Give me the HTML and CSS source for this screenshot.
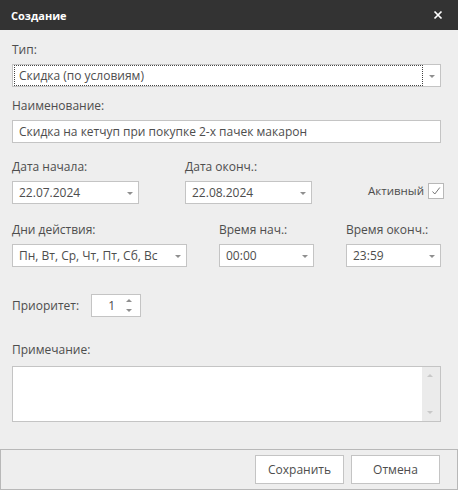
FILE: index.html
```html
<!DOCTYPE html>
<html lang="ru">
<head>
<meta charset="utf-8">
<title>Создание</title>
<link rel="stylesheet" href="styles.css">
</head>
<body>
<div class="dialog">
  <div class="titlebar">
    <span class="title">Создание</span>
    <svg class="close" width="10" height="10" viewBox="0 0 10 10"><path d="M1.5 1.5L8.5 8.5M8.5 1.5L1.5 8.5" stroke="#fff" stroke-width="1.7"/></svg>
  </div>
  <div class="content">
    <div class="field f-type">
      <div class="label">Тип:</div>
      <div class="box select full">
        <span class="focus">Скидка (по условиям)</span>
        <span class="arrow"></span>
      </div>
    </div>
    <div class="field f-name">
      <div class="label">Наименование:</div>
      <div class="box full text">Скидка на кетчуп при покупке 2-х пачек макарон</div>
    </div>
    <div class="row f-dates">
      <div class="field w-date">
        <div class="label">Дата начала:</div>
        <div class="box select"><span class="val">22.07.2024</span><span class="arrow"></span></div>
      </div>
      <div class="field w-date second">
        <div class="label">Дата оконч.:</div>
        <div class="box select"><span class="val">22.08.2024</span><span class="arrow"></span></div>
      </div>
      <div class="active">
        <span class="active-label">Активный</span>
        <span class="check"><svg width="12" height="12" viewBox="0 0 12 12"><path d="M2.5 6.5L4.8 9L9.8 2.5" fill="none" stroke="#666" stroke-width="0.9"/></svg></span>
      </div>
    </div>
    <div class="row f-days">
      <div class="field w-days">
        <div class="label">Дни действия:</div>
        <div class="box select"><span class="val">Пн, Вт, Ср, Чт, Пт, Сб, Вс</span><span class="arrow"></span></div>
      </div>
      <div class="field w-time t1">
        <div class="label">Время нач.:</div>
        <div class="box select"><span class="val">00:00</span><span class="arrow"></span></div>
      </div>
      <div class="field w-time t2">
        <div class="label">Время оконч.:</div>
        <div class="box select"><span class="val">23:59</span><span class="arrow"></span></div>
      </div>
    </div>
    <div class="row f-prio">
      <span class="label inline">Приоритет:</span>
      <div class="box spin">
        <span class="spin-val">1</span>
        <span class="spin-btns"><span class="up"></span><span class="down"></span></span>
      </div>
    </div>
    <div class="field f-note">
      <div class="label">Примечание:</div>
      <div class="box memo full">
        <div class="memo-area"></div>
        <div class="scroll"><span class="up"></span><span class="down"></span></div>
      </div>
    </div>
  </div>
  <div class="footer">
    <button class="btn">Сохранить</button>
    <button class="btn">Отмена</button>
  </div>
</div>
</body>
</html>
```
FILE: styles.css
```css
* { box-sizing: border-box; }
html, body { margin: 0; padding: 0; }
body {
  width: 458px;
  height: 490px;
  background: #eeeeee;
  font-family: "Open Sans", "Noto Sans", sans-serif;
  font-size: 12px;
  color: #4d4d4d;
  overflow: hidden;
}
.dialog { display: flex; flex-direction: column; height: 490px; }
.titlebar {
  height: 30px;
  background: #333333;
  display: flex;
  align-items: center;
  justify-content: space-between;
  padding: 0 15px 0 11px;
}
.title { color: #ffffff; font-weight: 700; font-size: 11px; }
.close { display: block; }
.content { flex: 1; padding: 12px 17px 0 12px; }
.label { line-height: 16px; height: 16px; color: #4d4d4d; }
.box {
  background: #ffffff;
  border: 1px solid #c4c4c4;
  height: 23px;
  display: flex;
  align-items: center;
  position: relative;
  color: #4d4d4d;
}
.full { width: 429px; }
.f-type .label { margin-bottom: 8px; }
.select { padding-left: 1px; }
.focus {
  flex: 1;
  height: 21px;
  border: 1px dotted #444;
  margin-right: 17px;
  display: flex;
  align-items: center;
  padding-left: 4px;
}
.arrow {
  position: absolute;
  right: 5px;
  top: 10px;
  width: 0; height: 0;
  border-left: 3.5px solid transparent;
  border-right: 3.5px solid transparent;
  border-top: 3.5px solid #8f8f8f;
}
.val { padding-left: 5px; }
.f-name { margin-top: 11px; }
.f-name .label { margin-bottom: 7px; }
.text { padding-left: 6px; }
.row { display: flex; }
.field .label { margin-bottom: 6px; }
.f-dates { margin-top: 16px; }
.w-date .box { width: 127px; }
.w-date.second { margin-left: 46px; }
.active { margin-left: 56px; margin-top: 23px; display: flex; align-items: center; height: 17px; }
.active-label { font-size: 11.5px; margin-right: 4px; }
.check {
  width: 16px; height: 16px;
  border: 1px solid #b8b8b8;
  background: #fff;
  display: flex; align-items: center; justify-content: center;
}
.f-days { margin-top: 18px; }
.w-days .box { width: 175px; }
.w-time .box { width: 95px; }
.t1 { margin-left: 32px; }
.t2 { margin-left: 32px; }
.f-prio { margin-top: 27px; align-items: center; }
.label.inline { margin-right: 12px; }
.spin { width: 50px; justify-content: flex-end; }
.spin-val { margin-right: 8px; }
.spin-btns { width: 14px; height: 21px; position: relative; margin-right: 3px; }
.spin-btns .up, .scroll .up {
  position: absolute; left: 3px; top: 4px;
  width: 0; height: 0;
  border-left: 3.5px solid transparent;
  border-right: 3.5px solid transparent;
  border-bottom: 3.5px solid #8f8f8f;
}
.spin-btns .down, .scroll .down {
  position: absolute; left: 3px; bottom: 4px;
  width: 0; height: 0;
  border-left: 3.5px solid transparent;
  border-right: 3.5px solid transparent;
  border-top: 3.5px solid #8f8f8f;
}
.f-note { margin-top: 25px; }
.f-note .label { margin-bottom: 8px; }
.memo { height: 56px; align-items: stretch; }
.memo-area { flex: 1; }
.scroll { width: 18px; background: #ebebeb; position: relative; }
.scroll .up { left: 5px; top: 7px; border-bottom-color: #c8c8c8; }
.scroll .down { left: 5px; bottom: 7px; border-top-color: #c8c8c8; }
.footer {
  height: 41px;
  border: 1px solid #b8b8b8;
  display: flex;
  justify-content: flex-end;
  align-items: center;
  padding-right: 17px;
  gap: 7px;
}
.btn {
  width: 89px; height: 29px;
  background: #ffffff;
  border: 1px solid #c4c4c4;
  font-family: "Open Sans", "Noto Sans", sans-serif;
  font-size: 12px;
  color: #4d4d4d;
  padding: 0;
  margin: 0;
}
```
